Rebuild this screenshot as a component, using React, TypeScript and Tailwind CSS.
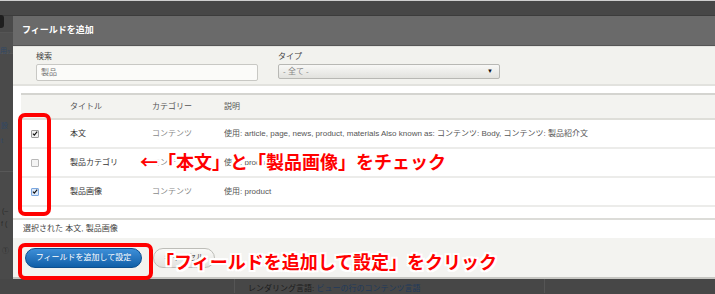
import React from "react";

const FONT = "[font-family:'Liberation_Sans','Noto_Sans_CJK_JP',sans-serif]";
const NOTE =
  "absolute text-[18px] font-bold leading-[22px] whitespace-nowrap text-[#ff0000] [font-family:'Noto_Sans_CJK_JP',sans-serif] [text-shadow:-2px_0_#fff,2px_0_#fff,0_-2px_#fff,0_2px_#fff,-2px_-2px_#fff,2px_-2px_#fff,-2px_2px_#fff,2px_2px_#fff,0_0_3px_#fff]";

type Row = { title: string; cat: string; desc: string; state: "on" | "off" | "focus" };

const ROWS: Row[] = [
  {
    title: "本文",
    cat: "コンテンツ",
    desc: "使用: article, page, news, product, materials Also known as: コンテンツ: Body, コンテンツ: 製品紹介文",
    state: "on",
  },
  { title: "製品カテゴリ", cat: "コンテンツ", desc: "使用: product", state: "off" },
  { title: "製品画像", cat: "コンテンツ", desc: "使用: product", state: "focus" },
];

function Check({ state }: { state: Row["state"] }) {
  const box =
    state === "focus"
      ? "border-[#7aa7e0] bg-[#dce9fa]"
      : state === "on"
        ? "border-[#9a9a9a] bg-[#f0f0f0]"
        : "border-[#b8b8b8] bg-[#f4f4f4]";
  return (
    <span className={`flex h-[8px] w-[8px] items-center justify-center rounded-[1px] border ${box}`}>
      {state !== "off" && (
        <svg viewBox="0 0 8 8" className="h-[7px] w-[7px]">
          <path d="M1.2 4.2 L3.1 6.1 L6.9 1.6" fill="none" stroke="#111" strokeWidth="1.5" />
        </svg>
      )}
    </span>
  );
}

export default function App() {
  return (
    <div className={`relative h-[294px] w-[715px] overflow-hidden bg-[#474747] ${FONT}`}>
      <div className="h-px bg-[#cfcfcf]" />
      <div className="h-[15px] border-b border-[#3c3c3c] bg-[#474747]" />

      <div className="flex h-[263px]">
        {/* page behind the overlay */}
        <div className="relative w-[13px] shrink-0 bg-[#4a4a4a]">
          <div className="absolute left-0 top-[-1px] h-[13px] w-[4px] rounded-r-[3px] bg-[#1e1e1e]" />
          <div className="absolute left-0 top-[16px] h-[22px] w-full border-y border-[#555] bg-[#505050]" />
          <span className="absolute left-0 top-[31px] text-[7px] leading-none text-[#2f4866]">用ｯ</span>
          <span className="absolute left-[1px] top-[106px] text-[7px] leading-none text-[#2f4866]">設</span>
          <span className="absolute left-[1px] top-[121px] text-[7px] leading-none text-[#2f4866]">t</span>
          <div className="absolute left-0 top-[155px] h-px w-full bg-[#585858]" />
          <span className="absolute left-[2px] top-[191px] text-[7px] leading-none text-[#2a2a2a]">(–</span>
          <span className="absolute left-[1px] top-[204px] text-[7px] leading-none text-[#2a2a2a]">f (</span>
          <span className="absolute left-[2px] top-[231px] text-[7px] leading-none text-[#2a2a2a]">①</span>
        </div>

        {/* modal */}
        <div className="flex min-w-0 flex-1 flex-col bg-white">
          <div className="flex h-[30px] shrink-0 items-center border-b border-[#555] bg-[#6a6a6a] pl-[9px]">
            <span className="text-[9px] font-bold text-white">フィールドを追加</span>
          </div>

          <div className="flex h-[40px] shrink-0 gap-[20px] border-t border-[#e4e4e0] border-b-2 border-b-[#e2e2de] bg-[#f2f2ee] pl-[23px] pt-[4px]">
            <div className="flex flex-col">
              <span className="text-[8px] leading-[12px] text-[#444]">検索</span>
              <div className="mt-[1px] flex h-[17px] w-[222px] items-center rounded-[2px] border border-[#c8c8c4] bg-[#fbfbf9] pl-[4px]">
                <span className="text-[8px] text-[#777]">製品</span>
              </div>
            </div>
            <div className="flex flex-col">
              <span className="text-[8px] leading-[12px] text-[#444]">タイプ</span>
              <div className="mt-[1px] flex h-[15px] w-[222px] items-center justify-between rounded-[2px] border border-[#b8b8b4] bg-gradient-to-b from-[#f8f8f6] to-[#e2e2de] pl-[4px] pr-[6px]">
                <span className="text-[8px] text-[#888]">- 全て -</span>
                <span className="text-[6px] text-[#111]">▼</span>
              </div>
            </div>
          </div>

          <div className="h-[7px] shrink-0" />

          <div className="ml-[8px] shrink-0 border-t-2 border-[#d4d4d0]">
            <div className="flex h-[25px] items-center border-b-2 border-[#deded9] bg-[#f3f3f0] text-[8px] text-[#555]">
              <span className="w-[49px]" />
              <span className="w-[82px]">タイトル</span>
              <span className="w-[72px]">カテゴリー</span>
              <span>説明</span>
            </div>
            {ROWS.map((r) => (
              <div key={r.title} className="flex h-[29px] items-center border-b-2 border-[#ececea] text-[8px]">
                <span className="w-[49px] pl-[10px]">
                  <Check state={r.state} />
                </span>
                <span className="w-[82px] text-[#333]">{r.title}</span>
                <span className="w-[72px] text-[#8a8a8a]">{r.cat}</span>
                <span className="whitespace-nowrap text-[#555]">{r.desc}</span>
              </div>
            ))}
          </div>

          <div className="h-[13px] shrink-0 border-b-2 border-[#dcdcd8]" />
          <div className="flex h-[18px] shrink-0 items-center pl-[10px] text-[8px] text-[#444]">
            選択された 本文, 製品画像
          </div>

          <div className="flex flex-1 items-center gap-[11px] border-b-2 border-[#c6c6c2] bg-[#f3f3f0] pl-[12px]">
            <button className="flex h-[20px] w-[117px] items-center justify-center rounded-full border border-[#0d4f8f] bg-gradient-to-b from-[#3d8fd8] to-[#0f5fa8] text-[8px] text-white">
              フィールドを追加して設定
            </button>
            <button className="flex h-[20px] w-[62px] items-center justify-center rounded-full border border-[#bdbdb8] bg-gradient-to-b from-[#fafaf8] to-[#e2e2de] text-[8px] text-[#555]">
              キャンセル
            </button>
          </div>
        </div>
      </div>

      {/* page behind, below the modal */}
      <div className="flex h-[14px]">
        <div className="w-[235px] border-r border-[#555]" />
        <div className="w-[310px] border-r border-[#555] pl-[13px] pt-[6px] text-[8px] leading-none whitespace-nowrap">
          <span className="text-[#1c1c1c]">レンダリング言語: </span>
          <span className="text-[#203a5c]">ビューの行のコンテンツ言語</span>
        </div>
      </div>

      {/* annotations */}
      <div className="absolute left-[18px] top-[113px] h-[103px] w-[33px] rounded-[7px] border-4 border-[#ff0000]" />
      <div className="absolute left-[18px] top-[243px] h-[37px] w-[135px] rounded-[7px] border-4 border-[#ff0000]" />
      <div className={`${NOTE} left-[140px] top-[150px]`}>←「本文」と「製品画像」をチェック</div>
      <div className={`${NOTE} left-[156px] top-[250px]`}>「フィールドを追加して設定」をクリック</div>
    </div>
  );
}
